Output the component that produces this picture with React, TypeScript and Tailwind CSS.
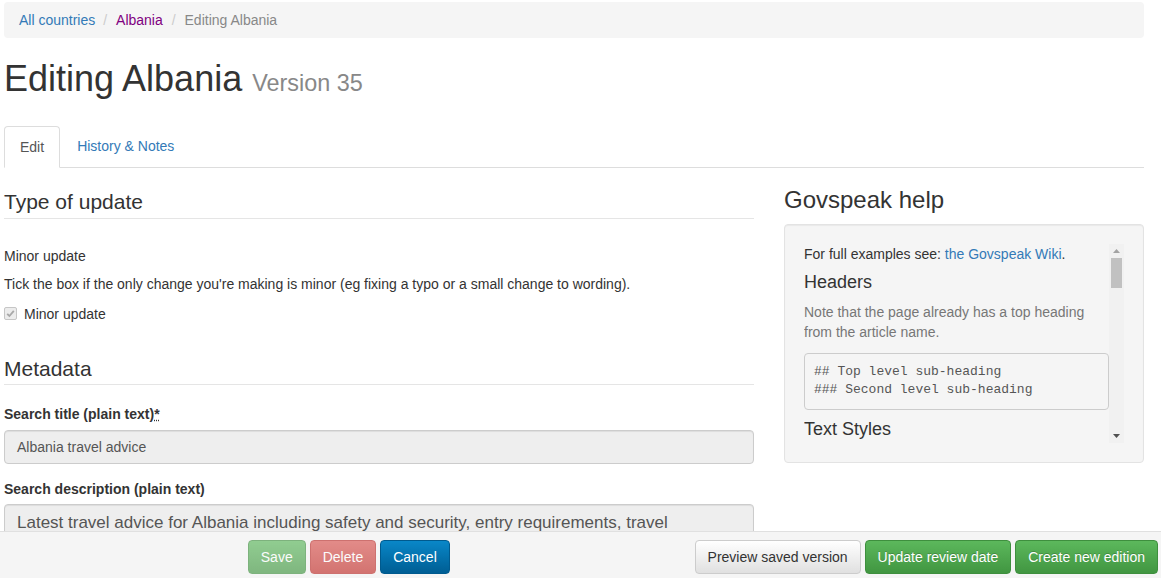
import React from 'react';

const Checkbox: React.FC = () => (
  <span className="inline-flex w-[13px] h-[13px] rounded-[2px] border border-[#c6c6c6] bg-[#ececec] items-center justify-center">
    <svg width="9" height="9" viewBox="0 0 9 9">
      <path d="M1.2 4.8 L3.4 7 L7.8 1.8" fill="none" stroke="#a8a8a8" strokeWidth="1.8" />
    </svg>
  </span>
);

const FakeScrollbar: React.FC = () => (
  <div className="w-[15px] h-full bg-[#f1f1f1] flex flex-col items-center">
    <div className="h-[14px] flex items-center justify-center">
      <svg width="7" height="4" viewBox="0 0 7 4">
        <path d="M0 4 L3.5 0 L7 4 Z" fill="#a3a3a3" />
      </svg>
    </div>
    <div className="w-[11px] h-[30px] bg-[#c1c1c1]" />
    <div className="flex-1" />
    <div className="h-[14px] flex items-center justify-center">
      <svg width="7" height="4" viewBox="0 0 7 4">
        <path d="M0 0 L7 0 L3.5 4 Z" fill="#505050" />
      </svg>
    </div>
  </div>
);

const App: React.FC = () => {
  return (
    <div className="h-[578px] overflow-hidden bg-white text-[14px] leading-[20px] text-[#333] font-['Liberation_Sans',Arial,sans-serif]">
      <div className="w-[1140px] ml-[4px]">
        {/* breadcrumb */}
        <ol className="mt-[2px] h-[36px] px-[15px] py-[8px] bg-[#f5f5f5] rounded-[4px] flex items-center">
          <li><a className="text-[#337ab7]">All countries</a></li>
          <li className="ml-[3px] px-[5px] text-[#ccc]">/&nbsp;</li>
          <li><a className="text-[#800080]">Albania</a></li>
          <li className="ml-[4px] px-[5px] text-[#ccc]">/&nbsp;</li>
          <li className="text-[#888]">Editing Albania</li>
        </ol>

        <h1 className="mt-[21px] text-[36px] leading-[39.6px] font-normal">
          Editing Albania <small className="text-[23.4px] text-[#888]">Version 35</small>
        </h1>

        {/* tabs */}
        <ul className="mt-[22px] flex border-b border-[#ddd]">
          <li className="-mb-px mr-[2px] px-[15px] py-[10px] border border-[#ddd] border-b-white rounded-t-[4px] bg-white text-[#555]">
            Edit
          </li>
          <li className="px-[15px] py-[10px] text-[#337ab7]">History &amp; Notes</li>
        </ul>

        <div className="flex">
          {/* left column */}
          <div className="w-[750px]">
            <h3 className="mt-[22px] text-[21px] leading-[23px] pb-[5px] border-b border-[#e5e5e5]">Type of update</h3>
            <div className="mt-[27px]">Minor update</div>
            <p className="mt-[8px]">Tick the box if the only change you're making is minor (eg fixing a typo or a small change to wording).</p>
            <label className="mt-[10px] flex items-center gap-[7px]">
              <Checkbox />
              <span>Minor update</span>
            </label>

            <h3 className="mt-[33px] text-[21px] leading-[23px] pb-[4px] border-b border-[#e5e5e5]">Metadata</h3>
            <div className="mt-[19px] font-bold">
              Search title (plain text)<abbr className="underline decoration-dotted">*</abbr>
            </div>
            <div className="mt-[6px] h-[34px] px-[12px] flex items-center bg-[#eee] border border-[#ccc] rounded-[4px] text-[#555] shadow-[inset_0_1px_1px_rgba(0,0,0,0.075)]">
              Albania travel advice
            </div>
            <div className="mt-[15px] font-bold">Search description (plain text)</div>
            <div className="mt-[5px] h-[120px] px-[12px] py-[6px] bg-[#eee] border border-[#ccc] rounded-[4px] text-[#555] text-[17px] leading-[24px] shadow-[inset_0_1px_1px_rgba(0,0,0,0.075)]">
              Latest travel advice for Albania including safety and security, entry requirements, travel
              <br />
              warnings and health
            </div>
          </div>

          {/* right column */}
          <div className="w-[360px] ml-[30px]">
            <h3 className="mt-[19px] text-[24px] leading-[26px]">Govspeak help</h3>
            <div className="mt-[11px] h-[239px] p-[19px] bg-[#f5f5f5] border border-[#e3e3e3] rounded-[4px] shadow-[inset_0_1px_1px_rgba(0,0,0,0.05)]">
              <div className="h-[199px] flex">
                <div className="flex-1 overflow-hidden">
                  <p>
                    For full examples see: <a className="text-[#337ab7]">the Govspeak Wiki</a>.
                  </p>
                  <h4 className="mt-[8px] text-[18px] leading-[20px]">Headers</h4>
                  <p className="mt-[10px] text-[#777]">Note that the page already has a top heading from the article name.</p>
                  <pre className="mt-[11px] p-[9px] bg-[#f5f5f5] border border-[#ccc] rounded-[4px] text-[13px] leading-[18.5px] text-[#555] font-['Liberation_Mono',monospace]">
{`## Top level sub-heading
### Second level sub-heading`}
                  </pre>
                  <h4 className="mt-[9px] text-[18px] leading-[20px]">Text Styles</h4>
                </div>
                <FakeScrollbar />
              </div>
            </div>
          </div>
        </div>
      </div>

      {/* fixed action bar */}
      <div className="fixed bottom-0 left-0 right-0 h-[47px] bg-[#f5f5f5] border-t border-[#e0e0e0] pt-[8px] flex whitespace-nowrap">
        <div className="w-[695px] pl-[3px] flex justify-center gap-[4px]">
          <button className="h-[34px] px-[12px] text-white rounded-[4px] border border-[#3e8f3e] bg-gradient-to-b from-[#5cb85c] to-[#419641] opacity-65">
            Save
          </button>
          <button className="h-[34px] px-[12px] text-white rounded-[4px] border border-[#b92c28] bg-gradient-to-b from-[#d9534f] to-[#c12e2a] opacity-65">
            Delete
          </button>
          <button className="h-[34px] px-[12px] text-white rounded-[4px] border border-[#005a8e] bg-gradient-to-b from-[#0a87c8] to-[#005e94]">
            Cancel
          </button>
        </div>
        <div className="flex-1 flex justify-end gap-[4px] pr-[3px]">
          <button className="shrink-0 h-[34px] px-[12px] text-[#333] rounded-[4px] border border-[#ccc] bg-gradient-to-b from-white to-[#e0e0e0]">
            Preview saved version
          </button>
          <button className="shrink-0 h-[34px] px-[12px] text-white rounded-[4px] border border-[#3e8f3e] bg-gradient-to-b from-[#5cb85c] to-[#419641] [text-shadow:0_-1px_0_rgba(0,0,0,0.2)]">
            Update review date
          </button>
          <button className="shrink-0 h-[34px] px-[12px] text-white rounded-[4px] border border-[#3e8f3e] bg-gradient-to-b from-[#5cb85c] to-[#419641] [text-shadow:0_-1px_0_rgba(0,0,0,0.2)]">
            Create new edition
          </button>
        </div>
      </div>
    </div>
  );
};

export default App;
